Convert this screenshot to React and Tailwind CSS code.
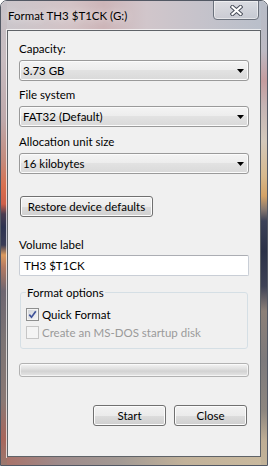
function Arrow() {
  return (
    <svg width="7" height="4" viewBox="0 0 7 4">
      <path d="M0 0h7L3.5 4z" fill="#000" />
    </svg>
  )
}

function Combo({ value }) {
  return (
    <div className="flex h-[21px] items-center justify-between rounded-[3px] border border-[#9a9a9a] bg-[linear-gradient(#f4f4f4,#ececec_50%,#e2e2e2_50%,#d9d9d9)] pl-[3px] pr-[4px] shadow-[inset_0_0_0_1px_#fbfbfb]">
      <span>{value}</span>
      <Arrow />
    </div>
  )
}

function Button({ children, className }) {
  return (
    <div className={`flex h-[21px] items-center justify-center rounded-[3px] border border-[#707070] bg-[linear-gradient(#f2f2f2,#ebebeb_50%,#dddddd_50%,#cfcfcf)] shadow-[inset_0_0_0_1px_#fcfcfc] ${className}`}>
      {children}
    </div>
  )
}

function Check({ checked, disabled }) {
  return (
    <span className={disabled ? "flex h-[13px] w-[13px] shrink-0 items-center justify-center border border-[#c6c6c6] bg-[#f4f4f4]" : "flex h-[13px] w-[13px] shrink-0 items-center justify-center border border-[#8e8f8f] bg-[linear-gradient(135deg,#cfd3d8,#f7f7f7)] shadow-[inset_0_0_0_1px_#f4f4f4]"}>
      {checked && (
        <svg width="9" height="9" viewBox="0 0 9 9">
          <path d="M1.3 4.6L3.5 7.2L7.8 1.2" stroke="#41549a" strokeWidth="1.7" fill="none" />
        </svg>
      )}
    </span>
  )
}

function CloseGlyph() {
  return (
    <svg width="13" height="11" viewBox="0 0 13 11">
      <path d="M2.5 2L10.5 9M10.5 2L2.5 9" stroke="#4b505c" strokeWidth="4.2" strokeLinecap="square" />
      <path d="M2.5 2L10.5 9M10.5 2L2.5 9" stroke="#fff" strokeWidth="2.2" strokeLinecap="square" />
    </svg>
  )
}

export default function App() {
  return (
    <div className="flex h-[466px] w-[268px] overflow-hidden rounded-t-[7px] border border-[#525864] font-[Lato,sans-serif] text-[11.5px] leading-[15px] text-black">
      {/* left frame */}
      <div className="w-[6px] bg-[linear-gradient(to_bottom,#c6c1c7_0px,#c8bcc0_60px,#bfa8aa_120px,#c48a7c_160px,#d9704f_185px,#cf5f49_203px,#4a3c50_213px,#2d3350_226px,#3a3c55_244px,#dc9a5e_254px,#b47a62_266px,#6e6670_290px,#7c7474_340px,#8a7874_400px,#a8665c_438px,#9a7a70_466px)]" />

      <div className="flex w-[254px] flex-col">
        {/* title bar */}
        <div className="flex h-[29px] items-start justify-between bg-[linear-gradient(90deg,#cbc6cb_0%,#d3c3c6_25%,#cdb5b8_38%,#d1c6cb_55%,#c6c3cb_75%,#b9bfca_100%)]">
          <span className="pl-px pt-[7px] [text-shadow:0_0_8px_#fff]">Format TH3 $T1CK (G:)</span>
          <div className="-mt-px mr-[2px] flex h-[20px] w-[46px] items-center justify-center rounded-b-[4px] border border-[#6b717c] bg-[linear-gradient(rgba(255,255,255,0.45),rgba(255,255,255,0.15))] shadow-[inset_0_0_0_1px_rgba(255,255,255,0.5)]">
            <CloseGlyph />
          </div>
        </div>

        {/* client area */}
        <div className="flex h-[427px] flex-col border border-[#5f6368] bg-[#f0f0f0] px-[11px] pt-[10px] shadow-[0_0_0_1px_rgba(255,255,255,0.7)]">
          <p>Capacity:</p>
          <div className="mt-[4px]"><Combo value="3.73 GB" /></div>

          <p className="mt-[6px]">File system</p>
          <div className="mt-[4px]"><Combo value="FAT32 (Default)" /></div>

          <p className="mt-[7px]">Allocation unit size</p>
          <div className="mt-[4px]"><Combo value="16 kilobytes" /></div>

          <Button className="ml-px mt-[22px] w-[133px]">Restore device defaults</Button>

          <p className="mt-[20px]">Volume label</p>
          <div className="mt-[3px] flex h-[21px] items-center rounded-[2px] border border-[#c9ced6] border-t-[#abadb3] bg-white pl-[4px]">TH3 $T1CK</div>

          <fieldset className="mx-px mt-[9px] flex flex-col gap-[3px] rounded-[3px] border border-[#d5dfe5] px-[5px] pb-[8px] pt-[7px]">
            <legend className="px-px">Format options</legend>
            <label className="flex items-center gap-[3px]">
              <Check checked />
              <span>Quick Format</span>
            </label>
            <label className="flex items-center gap-[3px] text-[#9a9a9a]">
              <Check disabled />
              <span>Create an MS-DOS startup disk</span>
            </label>
          </fieldset>

          <div className="mt-[14px] h-[14px] rounded-[3px] border border-[#b2b2b2] bg-[linear-gradient(#f4f4f4,#e0e0e0_40%,#d3d3d3_60%,#e6e6e6)] shadow-[inset_0_0_0_1px_rgba(255,255,255,0.6)]" />

          <div className="mt-[28px] flex justify-end gap-[8px] pr-[2px]">
            <Button className="w-[73px]">Start</Button>
            <Button className="w-[73px]">Close</Button>
          </div>
        </div>

        {/* bottom frame */}
        <div className="flex-1 bg-[linear-gradient(90deg,#a9736a,#9e8a8a_20%,#a39a94_45%,#c2b29a_70%,#c9b99e)]" />
      </div>

      {/* right frame */}
      <div className="w-[6px] bg-[linear-gradient(to_bottom,#b7bcc7_0px,#bdbac3_50px,#c59c9e_80px,#c5b4b4_105px,#d3c8bb_140px,#d7b98e_175px,#d4a266_195px,#8a7a70_208px,#3c4258_220px,#2b3147_250px,#3d4155_285px,#8c8078_310px,#7d7a7c_360px,#8e8780_410px,#bfae95_440px,#c2b399_466px)]" />
    </div>
  )
}
